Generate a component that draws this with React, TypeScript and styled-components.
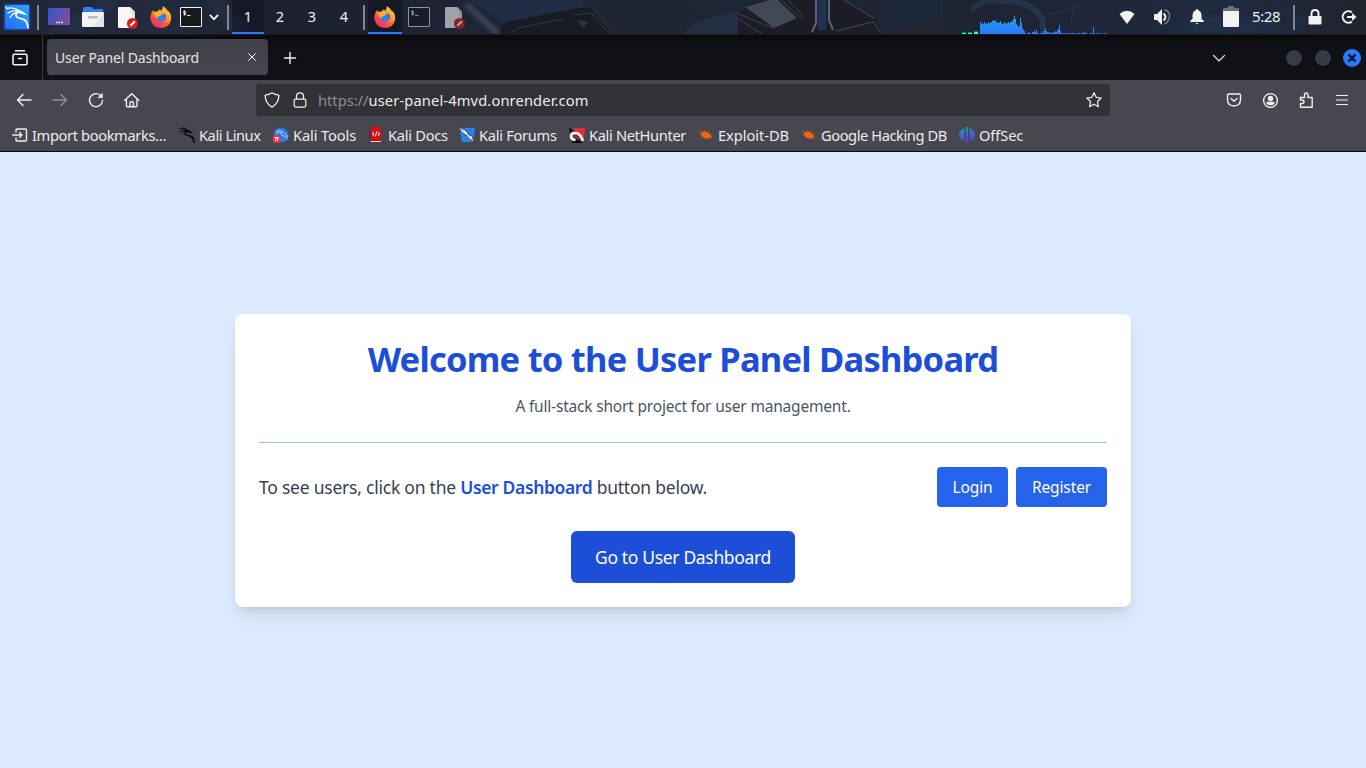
import React from "react";
import styled, { createGlobalStyle } from "styled-components";

const GlobalStyle = createGlobalStyle`
  *, *::before, *::after { box-sizing: border-box; }
  html, body, #root { height: 100%; }
  body { margin: 0; overflow: hidden; font-family: "Noto Sans", "Open Sans", sans-serif; }
  h1, p { margin: 0; }
  button { font-family: inherit; border: 0; }
  svg { display: block; flex: none; }
`;

const Screen = styled.div`
  display: flex;
  flex-direction: column;
  width: 100%;
  height: 100vh;
`;

/* ---------- desktop panel ---------- */

const Panel = styled.header`
  position: relative;
  display: flex;
  justify-content: space-between;
  height: 35px;
  flex: none;
  background: #1f222d;
  color: #f0f0f0;
  overflow: hidden;
`;

const Wallpaper = styled.svg`
  position: absolute;
  inset: 0;
`;

const PanelGroup = styled.div`
  position: relative;
  display: flex;
  height: 34px;
`;

const PanelSlot = styled.div<{ $w: number; $active?: boolean }>`
  display: flex;
  align-items: center;
  justify-content: center;
  width: ${(p) => p.$w}px;
  height: 34px;
  background: ${(p) => (p.$active ? "rgba(10, 14, 26, 0.45)" : "transparent")};
  box-shadow: ${(p) => (p.$active ? "inset 0 -2px #2777ff" : "none")};
`;

const Workspace = styled(PanelSlot)`
  padding-bottom: 2px;
  font-size: 14.5px;
  line-height: 32px;
`;

const PanelRule = styled.span<{ $gap: number }>`
  width: 2px;
  height: 25px;
  margin: 5px ${(p) => p.$gap}px 0 0;
  background: #85868b;
`;

const Clock = styled.span`
  width: 41px;
  height: 33px;
  line-height: 33px;
  font-size: 15px;
  letter-spacing: -0.4px;
`;

/* ---------- browser ---------- */

const TabStrip = styled.div`
  display: flex;
  align-items: center;
  height: 45px;
  flex: none;
  background: linear-gradient(#0b0b0e, #101116 12px);
  color: #f4f4f4;
`;

const ViewButton = styled.div`
  display: flex;
  align-items: center;
  width: 43px;
  height: 45px;
  padding-left: 11px;
  border-right: 1px solid #3b3c41;
`;

const Tab = styled.div`
  display: flex;
  align-items: center;
  justify-content: space-between;
  width: 221px;
  height: 36px;
  margin: 0 15px 1px 4px;
  padding: 0 11px 0 8px;
  border-radius: 4px;
  background: linear-gradient(#3f4047, #46474f);
  color: #e3e3e4;
  font-size: 14px;
  letter-spacing: -0.15px;
  white-space: nowrap;
`;

const Spacer = styled.div`
  flex: 1;
`;

const WindowControls = styled.div`
  display: flex;
  align-items: center;
  gap: 11px;
  margin: 0 5px 0 59px;
`;

const Knob = styled.span<{ $close?: boolean }>`
  display: grid;
  place-items: center;
  width: 18px;
  height: 18px;
  border: ${(p) => (p.$close ? "0" : "1px solid #08090c")};
  border-radius: 50%;
  background: ${(p) => (p.$close ? "#2777ff" : "#373b47")};
`;

const NavBar = styled.div`
  display: flex;
  align-items: center;
  height: 40px;
  flex: none;
  background: #46474f;
  color: #fbfbfe;
`;

const NavButtons = styled.div`
  display: flex;
  gap: 20px;
  width: 256px;
  padding-left: 16px;
`;

const UrlBar = styled.div`
  display: flex;
  align-items: center;
  width: 854px;
  height: 32px;
  padding: 0 8px;
  border-radius: 4px;
  background: #313236;
`;

const SiteIcons = styled.div`
  display: flex;
  gap: 12px;
`;

const Address = styled.div`
  flex: 1;
  margin-left: 10px;
  font-size: 14.67px;
  color: #ececee;
  letter-spacing: 0.14px;
  white-space: nowrap;
`;

const Scheme = styled.span`
  color: #8f8f93;
  letter-spacing: 0;
`;

const NavTools = styled.div`
  display: flex;
  gap: 20px;
  margin-left: 116px;
`;

const BookmarkBar = styled.nav`
  display: flex;
  align-items: center;
  height: 32px;
  flex: none;
  padding: 0 0 1px 12px;
  background: #46474f;
  border-bottom: 1px solid #0c0c0d;
`;

const Bookmark = styled.a<{ $w: number; $track: number }>`
  display: flex;
  align-items: center;
  gap: 4px;
  width: ${(p) => p.$w}px;
  flex: none;
  color: #ececee;
  font-size: 14.67px;
  line-height: 20px;
  letter-spacing: ${(p) => p.$track}px;
  white-space: nowrap;
`;

/* ---------- page ---------- */

const Page = styled.main`
  display: flex;
  flex: 1;
  align-items: center;
  justify-content: center;
  background: #dbeafe;
`;

const Card = styled.section`
  width: 896px;
  padding: 24px;
  border-radius: 8px;
  background: #fff;
  box-shadow: 0 10px 15px -3px rgba(0, 0, 0, 0.1), 0 4px 6px -4px rgba(0, 0, 0, 0.1);
`;

const CardHeader = styled.div`
  padding-bottom: 24px;
  margin-bottom: 24px;
  border-bottom: 1px solid #93c5fd;
  text-align: center;
`;

const Title = styled.h1`
  height: 40px;
  margin-bottom: 16px;
  color: #1d4ed8;
  font-size: 34.5px;
  line-height: 41px;
  font-weight: 700;
  letter-spacing: -0.77px;
  white-space: nowrap;
`;

const Subtitle = styled.p`
  color: #4b5563;
  font-size: 15.5px;
  line-height: 24px;
  letter-spacing: -0.19px;
`;

const ActionRow = styled.div`
  display: flex;
  align-items: center;
  justify-content: space-between;
  margin-bottom: 24px;
`;

const Hint = styled.p`
  color: #374151;
  font-size: 17.5px;
  line-height: 28px;
  letter-spacing: -0.23px;
  white-space: nowrap;
`;

const Strong = styled.span`
  color: #1d4ed8;
  font-weight: 600;
  letter-spacing: -0.36px;
`;

const ButtonGroup = styled.div`
  display: flex;
  gap: 8px;
`;

const Button = styled.button<{ $w: number; $large?: boolean }>`
  display: block;
  width: ${(p) => p.$w}px;
  height: ${(p) => (p.$large ? 52 : 40)}px;
  margin: ${(p) => (p.$large ? "0 auto" : "0")};
  padding: 0;
  border-radius: ${(p) => (p.$large ? 6 : 4)}px;
  background: ${(p) => (p.$large ? "#1d4ed8" : "#2563eb")};
  color: #fff;
  font-size: ${(p) => (p.$large ? 17.5 : 15.5)}px;
  letter-spacing: ${(p) => (p.$large ? -0.34 : -0.12)}px;
  white-space: nowrap;
`;

/* ---------- drawings ---------- */

const PanelArt = () => (
  <Wallpaper width="1366" height="35" viewBox="0 0 1366 35">
    <defs>
      <linearGradient id="sky" x1="0" x2="1">
        <stop offset="0" stopColor="#1f2638" />
        <stop offset=".12" stopColor="#222a3c" />
        <stop offset=".2" stopColor="#1d212e" />
        <stop offset=".45" stopColor="#1e2738" />
        <stop offset=".7" stopColor="#1d2331" />
        <stop offset=".9" stopColor="#202a3f" />
        <stop offset="1" stopColor="#20232e" />
      </linearGradient>
      <filter id="soft"><feGaussianBlur stdDeviation="2" /></filter>
    </defs>
    <rect width="1366" height="35" fill="url(#sky)" />
    <path d="M40 35 100 0h22L80 35zM205 0l30 35h22L222 0z" fill="#27334c" opacity=".6" filter="url(#soft)" />
    <path d="M470 0h115l-5 10-76 14z" fill="#212d44" />
    <path d="M466 4l32 30" stroke="#414e68" strokeWidth="6" opacity=".8" filter="url(#soft)" />
    <path d="M587 0v9" stroke="#3f5885" strokeWidth="8" filter="url(#soft)" />
    <path d="M501 34v-8l6-4 70-14h13l24 26z" fill="#191b24" />
    <path d="M511 33l7-5 46-9M575 15l16-2 5 4" stroke="#2b3c4c" fill="none" />
    <path d="M577 20l11 2-5 6z" fill="#2f333e" />
    <path d="M592 15l18 19M598 17l16 17" stroke="#35323b" fill="none" />
    <path d="M595 0h92l22 18-27 16h-68z" fill="#1d2433" />
    <path d="M684 34q5-11 22-15l34-8v23z" fill="#252f43" />
    <path d="M738 34V14l10-8 22-6h72l34 19 7 15z" fill="#1b1c25" />
    <path d="M745 7l25-7h8l19 18-23 10z" fill="#424856" />
    <path d="M739 14l34 14M739 19l23 15M781 0l22 20M788 0l16 17" stroke="#45424a" fill="none" />
    <path d="M816 0v23l-4 9M829 0v20l4 10" stroke="#58647a" strokeWidth="2" fill="none" />
    <path d="M822 0v30" stroke="#22334f" strokeWidth="9" />
    <path d="M836 31l37-9 9 12M844 0l31 19" stroke="#3f4b5d" fill="none" />
    <path d="M884 28l58-12v18h-58z" fill="#202433" />
    <path d="M943 0v18l-57 11V0z" fill="#1d293b" />
    <path d="M971 11q10-13 30-10 31 0 42 18v15" stroke="#2a3750" strokeWidth="6" fill="none" opacity=".7" />
    <path d="M1018 0q20 3 27 29M1047 15l36-9M1075 0l-5 28" stroke="#2d4250" fill="none" opacity=".7" />
    <path d="M1170 34l32-19 70 4 26 15zM1270 0l34 18v16" fill="#223454" opacity=".45" filter="url(#soft)" />
    <rect y="34" width="1366" height="1" fill="#1b1c22" />
  </Wallpaper>
);

const KaliLogo = () => (
  <svg width="28" height="28" viewBox="0 0 28 28">
    <defs>
      <linearGradient id="kali" x1="1" x2="0" y2="1">
        <stop stopColor="#29a8fb" />
        <stop offset="1" stopColor="#2767ff" />
      </linearGradient>
      <filter id="glow"><feGaussianBlur stdDeviation="1" /></filter>
    </defs>
    <rect x="1" y="1" width="26" height="26" rx="2" fill="#1764ee" opacity=".7" filter="url(#glow)" />
    <rect x="2" y="2" width="24" height="24" fill="url(#kali)" />
    <path d="M3.500 5.500Q10 3.500 17 8M5 10Q10 6.500 17 8M7 14.500Q10 9.500 16 9M4 5.500 2.800 4.500" stroke="#fff" strokeWidth="1.300" fill="none" strokeLinecap="round" />
    <path d="M15 7Q19 7.500 22 10L24.500 12.500 21 11.500Q18 11 15.500 10z" fill="#fff" />
    <path d="M14.500 9Q11.500 12 14.500 14.500 17 15.700 20 16.200 24.300 17.500 25 24.500" stroke="#fff" strokeWidth="1.800" fill="none" strokeLinecap="round" />
  </svg>
);

const DesktopIcon = () => (
  <svg width="22" height="18" viewBox="0 0 22 18">
    <defs>
      <linearGradient id="desk" x1="0" x2="1" y2=".5">
        <stop stopColor="#3452cf" />
        <stop offset="1" stopColor="#79519f" />
      </linearGradient>
    </defs>
    <rect width="22" height="17" rx="1" fill="url(#desk)" />
    <path d="M8 14.500h1.500M10.500 14.500h1.500M13 14.500h1.500" stroke="#fff" strokeWidth="1.500" />
  </svg>
);

const FolderIcon = () => (
  <svg width="22" height="20" viewBox="0 0 22 20">
    <path d="M1 1.500Q1 0 2.500 0h7l2 2h8.500q1 0 1 1v6H1z" fill="#3180f0" />
    <rect y="5" width="22" height="15" rx="1" fill="#f3f3f3" />
    <path d="M22 5v14q0 1-1 1h-10z" fill="#dedede" opacity=".8" />
    <rect x="6" y="9" width="10" height="2.500" rx="1.200" fill="#b8b8b8" />
  </svg>
);

const DocumentIcon = ({ dim = false }: { dim?: boolean }) => (
  <svg width="22" height="23" viewBox="-1 0 22 23" opacity={dim ? 0.6 : 1}>
    <path d="M2 1h11l5 5v15q0 1-1 1H2q-1 0-1-1V2q0-1 1-1z" fill="#f7f7f7" />
    <path d="M13 1l5 5v10z" fill="#ddd" />
    <circle cx="15.500" cy="17.500" r="5.500" fill="#d51d23" />
    <path d="M12.800 20.200l.6-2 3.700-3.700 1.500 1.500-3.700 3.700z" fill="#fff" />
  </svg>
);

const FirefoxIcon = () => (
  <svg width="22" height="22" viewBox="0 0 22 22">
    <defs>
      <linearGradient id="fox" x1=".9" y1="0" x2=".2" y2="1">
        <stop stopColor="#ffe742" />
        <stop offset=".4" stopColor="#ff9a2c" />
        <stop offset=".7" stopColor="#ff4c40" />
        <stop offset="1" stopColor="#ed2475" />
      </linearGradient>
    </defs>
    <path d="M3 4l1.500 2L8 5l2-2 1.500 3L13 0q5 4 5 6l1-1q3 5 2 9-2 8-10 8T1 15Q-1 9 3 4z" fill="url(#fox)" />
    <circle cx="11" cy="11.500" r="4.700" fill="#3b7ce9" />
    <path d="M4 6h5q2-2 3-2-1 3 2 3l-4 3q-2 0-3 2Q4 10 4 6z" fill="#ffad2c" />
    <path d="M14 7q3 2 2 6l-2-3z" fill="#7057d4" />
  </svg>
);

const TerminalIcon = ({ dim = false }: { dim?: boolean }) => (
  <svg width="22" height="20" viewBox="0 0 22 20" opacity={dim ? 0.55 : 1}>
    <rect x=".5" y=".5" width="21" height="19" rx=".5" fill="#17181c" stroke="#f2f2f2" />
    <path d="M5.700 4.300H3.600v1.600h2v1.700H3.300M4.600 3.300v5.200M7 8.500h3.500" stroke="#f4f4f4" strokeWidth=".9" fill="none" />
  </svg>
);

const LOAD = [
  12, 10, 11, 10, 12, 10, 11, 10, 12, 11, 11, 12, 13, 14, 13, 14, 12, 11, 12, 11, 13, 11, 10, 10, 12, 11, 10, 11, 12, 11,
  12, 12, 13, 15, 18, 15, 10, 8, 7, 8, 16, 11, 6, 4, 3, 1, 0, 1, 2, 1, 1, 0, 2, 2, 4, 2, 4, 1, 1, 0, 1, 1, 1, 3, 3, 6, 3, 2,
  2, 1, 2, 1, 1, 2, 2, 3, 2, 4, 5, 9, 3, 1, 0, 1, 1, 1, 0, 1, 1, 1, 0, 1, 1, 1, 1, 0, 1, 1, 1, 1, 0, 1, 1, 2, 1, 2, 0, 1, 0, 0, 1, 1,
  1, 7, 1, 0, 1, 1, 0, 1, 0, 1, 0, 0, 1, 0, 1, 0,
];

const LoadGraph = () => (
  <svg width="148" height="34" viewBox="0 0 148 34">
    <defs>
      <linearGradient id="load" gradientUnits="userSpaceOnUse" x1="0" x2="0" y1="18" y2="34">
        <stop stopColor="#1f9df2" />
        <stop offset="1" stopColor="#2977fb" />
      </linearGradient>
    </defs>
    <path d="M0 32.500h4M6 32.500h4M12 31.500h4" stroke="#0f7f80" />
    <path d="M0 33.500h4M6 33.500h4" stroke="#18ffdc" />
    <path d="M12 33h4" stroke="#18ffdc" strokeWidth="2" />
    <g fill="url(#load)">
      {LOAD.map((h, i) => (
        <rect key={i} x={18 + i} y={34 - h} width="1" height={h} />
      ))}
    </g>
  </svg>
);

const Chevron = ({ size, weight }: { size: number; weight: number }) => (
  <svg width={size} height={size} viewBox="0 0 12 12" fill="none" stroke="#f2f2f2" strokeWidth={weight}>
    <path d="M1 3.500l5 5 5-5" />
  </svg>
);

const WifiIcon = () => (
  <svg width="16" height="16" viewBox="0 0 16 16">
    <path d="M.5 5Q8-1.500 15.500 5L8 15z" fill="#f2f2f2" />
  </svg>
);

const VolumeIcon = () => (
  <svg width="18" height="18" viewBox="0 0 18 18">
    <path d="M1 6h3l5-5v16l-5-5H1z" fill="#f2f2f2" />
    <path d="M10.500 5.500q4 3.500 0 7" stroke="#f2f2f2" strokeWidth="2" fill="none" />
    <path d="M11.500 1.800q8 2.500 3.500 11.200-1.500 2-3.500 3" stroke="#777c87" strokeWidth="1.500" fill="none" />
  </svg>
);

const BellIcon = () => (
  <svg width="16" height="16" viewBox="0 0 16 16" fill="#f2f2f2">
    <path d="M8 0q1 0 1 1.200Q12 2 12.500 6v4l2.500 2v1H1v-1l2.500-2V6Q4 2 7 1.200 7 0 8 0zM6.500 14h3L8 15.500z" />
  </svg>
);

const BatteryIcon = () => (
  <svg width="16" height="22" viewBox="0 0 16 22">
    <path d="M5 0h6v2h4q1 0 1 1v4H0V3q0-1 1-1h4z" fill="#6b6f78" />
    <path d="M0 5h16v15q0 1-1 1H1q-1 0-1-1z" fill="#f2f2f2" />
  </svg>
);

const PanelLockIcon = () => (
  <svg width="14" height="16" viewBox="0 0 14 16">
    <path d="M3.500 8V4.500Q3.500 1 7 1t3.500 3.500V8" stroke="#f2f2f2" strokeWidth="2" fill="none" />
    <rect x=".5" y="7" width="13" height="8.500" rx="1" fill="#f2f2f2" />
  </svg>
);

const LogoutIcon = () => (
  <svg width="16" height="16" viewBox="0 0 16 16">
    <path d="M10.800 3.400A5.700 5.700 0 1 0 10.800 12.600" stroke="#f2f2f2" strokeWidth="2" fill="none" />
    <path d="M6 7h5V4l4.500 4-4.500 4V9H6z" fill="#f2f2f2" />
  </svg>
);

type LineIconProps = { children: React.ReactNode; size?: number; weight?: number; dim?: boolean };

const LineIcon = ({ children, size = 16, weight = 1.25, dim = false }: LineIconProps) => (
  <svg
    width={size}
    height={size}
    viewBox={`0 0 ${size} ${size}`}
    fill="none"
    stroke="#f0f0f2"
    strokeWidth={weight}
    strokeLinecap="round"
    strokeLinejoin="round"
    opacity={dim ? 0.42 : 1}
  >
    {children}
  </svg>
);

const DragonMark = () => (
  <svg width="16" height="16" viewBox="0 0 16 16" fill="none" stroke="#08090b" strokeLinecap="round">
    <path d="M.5 1.500Q4 .8 8 3M1 4.500Q4 2.500 8 3.500M2.500 6.500Q5 4 8 4M4 .6l3 1.400" strokeWidth=".9" />
    <path d="M7 2.500Q11 3 13.500 6.500L10 5.500 7 4.500z" fill="#08090b" strokeWidth=".5" />
    <path d="M7.500 4Q5 6 7 7.800 9 8.800 11 9 14 10 15 15" strokeWidth="1.700" />
    <path d="M12 9.500q3 0 3.500 2" />
  </svg>
);

const ToolsMark = () => (
  <svg width="16" height="16" viewBox="0 0 16 16">
    <circle cx="8" cy="8" r="7.500" fill="#2878ee" />
    <path d="M3 4.500Q8 2 11 6q3 2 4 4M3 6.500q3-2 6-1M8 6q0 3 4 3.500 2 1 2 3" stroke="#b9d8ff" strokeWidth="1" fill="none" />
    <rect x="0" y="8" width="7.500" height="8" rx="2.500" fill="#ef3440" />
    <path d="M1.500 10.500h4.500M2.800 10.500v3.500M4.800 10.500v3.500" stroke="#fff" />
  </svg>
);

const DocsMark = () => (
  <svg width="16" height="16" viewBox="0 0 16 16">
    <path d="M1 0h12v15.500H1z" fill="#ad0f16" />
    <path d="M3 0h10v13H3z" fill="#df0c13" />
    <path d="M2 14.500h11" stroke="#efe4df" />
    <path d="M1 0h1.500v15H1z" fill="#283f70" />
    <path d="M6 5L4.500 7 6 9M10 5l1.500 2L10 9M8.800 4.500L7.300 9.500" stroke="#fff" fill="none" />
  </svg>
);

const ForumsMark = () => (
  <svg width="16" height="16" viewBox="0 0 16 16">
    <path d="M0 1h16L14 15H3z" fill="#2583f5" />
    <path d="M0 0l6 3 4 5 3 1 2 6-5-3-3-4-4-2z" fill="#f4f4ed" stroke="#20242b" strokeWidth=".7" />
    <path d="M1 1l5 6M8 8l5 5" stroke="#888a88" strokeWidth=".7" />
  </svg>
);

const HunterMark = () => (
  <svg width="16" height="16" viewBox="0 0 16 16">
    <path d="M0 1l4 2-3 3zM2 10l12 5-2 1H3z" fill="#090a0d" />
    <path d="M4 1h12l-1 11-3 1z" fill="#ef2635" />
    <path d="M14 14Q11.500 7 7.500 6 2 5.500 2 9.500 2.500 13 6.500 13" fill="none" stroke="#f7f7f7" strokeWidth="2.600" />
    <path d="M5 9.800q2-1.500 4.500 2" stroke="#cf1629" strokeWidth="1.600" fill="none" />
  </svg>
);

const BugMark = () => (
  <svg width="16" height="16" viewBox="0 0 16 16">
    <path d="M1 3.500l4 2M1 8.500l3-1M6 2l1 3M10 4l2-1.500M12 8l2.500-1M4 10l-1.500 1.500M8 11.500L7 13M12 11l2 2" stroke="#a85a2b" strokeWidth=".7" />
    <path d="M1 4.800q2 .7 3 .5 3-1.800 6.500.5 2.300 1.700 3.500 5l-2-.3q-1.500 2-5 .8Q3.500 10 3.300 7z" fill="#f06513" />
  </svg>
);

const OffsecMark = () => (
  <svg width="16" height="16" viewBox="0 0 16 16">
    <defs>
      <linearGradient id="off" x1="0" x2=".3" y1="0" y2="1">
        <stop stopColor="#12a6b8" />
        <stop offset="1" stopColor="#6438dc" />
      </linearGradient>
    </defs>
    <path d="M5.500 1v13Q0 12 0 7.500T5.500 1zM10.500 1Q16 3 16 7.500T10.500 14zM7 0h2v16H7z" fill="url(#off)" />
  </svg>
);

const ImportMark = () => (
  <LineIcon weight={1.4}>
    <path d="M4 5V3q0-1 1-1h8.500q1 0 1 1v10q0 1-1 1H5q-1 0-1-1v-2M.7 8h9M7.500 5.500L10 8l-2.500 2.500" />
  </LineIcon>
);

const BOOKMARKS = [
  { label: "Import bookmarks…", width: 167, track: -0.38, icon: <ImportMark /> },
  { label: "Kali Linux", width: 94, track: -0.45, icon: <DragonMark /> },
  { label: "Kali Tools", width: 95, track: -0.12, icon: <ToolsMark /> },
  { label: "Kali Docs", width: 91, track: -0.28, icon: <DocsMark /> },
  { label: "Kali Forums", width: 110, track: -0.3, icon: <ForumsMark /> },
  { label: "Kali NetHunter", width: 129, track: -0.35, icon: <HunterMark /> },
  { label: "Exploit-DB", width: 103, track: -0.05, icon: <BugMark /> },
  { label: "Google Hacking DB", width: 158, track: -0.43, icon: <BugMark /> },
  { label: "OffSec", width: 70, track: -0.1, icon: <OffsecMark /> },
];

const DesktopPanel = () => (
  <Panel>
    <PanelArt />
    <PanelGroup>
      <PanelSlot $w={34}><KaliLogo /></PanelSlot>
      <PanelSlot $w={3} />
      <PanelRule $gap={3} />
      <PanelSlot $w={34}><DesktopIcon /></PanelSlot>
      <PanelSlot $w={34}><FolderIcon /></PanelSlot>
      <PanelSlot $w={34}><DocumentIcon /></PanelSlot>
      <PanelSlot $w={34}><FirefoxIcon /></PanelSlot>
      <PanelSlot $w={26}><TerminalIcon /></PanelSlot>
      <PanelSlot $w={19}><Chevron size={10} weight={2.2} /></PanelSlot>
      <PanelSlot $w={4} />
      <PanelRule $gap={3} />
      {["1", "2", "3", "4"].map((n) => (
        <Workspace key={n} $w={32} $active={n === "1"}>{n}</Workspace>
      ))}
      <PanelSlot $w={3} />
      <PanelRule $gap={3} />
      <PanelSlot $w={34} $active><FirefoxIcon /></PanelSlot>
      <PanelSlot $w={34}><TerminalIcon dim /></PanelSlot>
      <PanelSlot $w={35}><DocumentIcon dim /></PanelSlot>
    </PanelGroup>
    <PanelGroup>
      <LoadGraph />
      <PanelSlot $w={34}><WifiIcon /></PanelSlot>
      <PanelSlot $w={35}><VolumeIcon /></PanelSlot>
      <PanelSlot $w={35}><BellIcon /></PanelSlot>
      <PanelSlot $w={34}><BatteryIcon /></PanelSlot>
      <PanelSlot $w={4} />
      <Clock>5:28</Clock>
      <PanelRule $gap={3} />
      <PanelSlot $w={34}><PanelLockIcon /></PanelSlot>
      <PanelSlot $w={34}><LogoutIcon /></PanelSlot>
    </PanelGroup>
  </Panel>
);

const Browser = () => (
  <>
    <TabStrip>
      <ViewButton>
        <LineIcon size={18} weight={1.6}>
          <path d="M4.500 1.800h9M3.500 5.300h11q1.500 0 1.500 1.500v7.500q0 1.500-1.500 1.500h-11Q2 15.800 2 14.300V6.800q0-1.500 1.500-1.500zM7.500 9.500h3" />
        </LineIcon>
      </ViewButton>
      <Tab>
        User Panel Dashboard
        <LineIcon size={10} weight={1}><path d="M1.500 1.500l7 7M8.500 1.500l-7 7" /></LineIcon>
      </Tab>
      <LineIcon size={14} weight={1.4}><path d="M7 1.500v11M1.500 7h11" /></LineIcon>
      <Spacer />
      <Chevron size={14} weight={1.1} />
      <WindowControls>
        <Knob />
        <Knob />
        <Knob $close>
          <svg width="10" height="10" viewBox="0 0 10 10"><path d="M1.500 1.500l7 7M8.500 1.500l-7 7" stroke="#0b1020" strokeWidth="2.300" /></svg>
        </Knob>
      </WindowControls>
    </TabStrip>
    <NavBar>
      <NavButtons>
        <LineIcon weight={1.5}><path d="M15 8H1.500M7 2.500L1.500 8 7 13.500" /></LineIcon>
        <LineIcon weight={1.5} dim><path d="M1 8h13.500M9 2.500L14.500 8 9 13.500" /></LineIcon>
        <LineIcon weight={1.4}>
          <path d="M14.500 8.500A6.500 6.500 0 1 1 12.300 3.300L13.500 4.500" />
          <path d="M14.500 1.200v4.600H9.900z" fill="#f0f0f2" strokeWidth=".4" />
        </LineIcon>
        <LineIcon weight={1.4}><path d="M.7 8.300l7-6.500 7 6.500M2.400 7.300v6.500q0 1 1 1H12q1 0 1-1V7.300M6 14.800v-4q0-1 1-1h1.400q1 0 1 1v4" /></LineIcon>
      </NavButtons>
      <UrlBar>
        <SiteIcons>
          <LineIcon><path d="M8 .8Q11 3 14.800 3.200 15 10.800 8 15.200 1 10.800 1.200 3.200 5 3 8 .8z" /></LineIcon>
          <LineIcon><path d="M4.500 7V4Q4.500 .8 8 .8T11.500 4v3M3.500 7h9q1.300 0 1.300 1.300v5.200q0 1.500-1.300 1.500h-9q-1.300 0-1.300-1.500V8.300Q2.200 7 3.500 7z" /></LineIcon>
        </SiteIcons>
        <Address><Scheme>https://</Scheme>user-panel-4mvd.onrender.com</Address>
        <LineIcon><path d="M8 .7l2.200 4.600 5 .7-3.700 3.500.9 5.200L8 12.200l-4.400 2.500.9-5.200L.8 6l5-.7z" /></LineIcon>
      </UrlBar>
      <NavTools>
        <LineIcon weight={1.4}><path d="M2.500 2h11q1 0 1 1v4.500Q14.500 14 8 14T1.500 7.500V3q0-1 1-1zM5 6.500l3 2.700 3-2.700" /></LineIcon>
        <LineIcon weight={1.4}>
          <circle cx="8.500" cy="8.500" r="6.900" />
          <circle cx="8.500" cy="6.500" r="2" fill="#f0f0f2" />
          <path d="M5 10.500h7q-.5 2-3.500 2T5 10.500z" fill="#f0f0f2" />
        </LineIcon>
        <LineIcon weight={1.4}><path d="M6.500 5.500V3q0-2 1.700-2t1.700 2v2.500h4.300v9.700H2.500v-3.700H4q2 0 2-1.700T4 8H2.500V5.500z" /></LineIcon>
        <LineIcon weight={1.2}><path d="M2.500 3.500h11M2.500 8h11M2.500 12.500h11" /></LineIcon>
      </NavTools>
    </NavBar>
    <BookmarkBar>
      {BOOKMARKS.map((b) => (
        <Bookmark key={b.label} $w={b.width} $track={b.track}>
          {b.icon}
          {b.label}
        </Bookmark>
      ))}
    </BookmarkBar>
  </>
);

export default function App() {
  return (
    <Screen>
      <GlobalStyle />
      <DesktopPanel />
      <Browser />
      <Page>
        <Card>
          <CardHeader>
            <Title>Welcome to the User Panel Dashboard</Title>
            <Subtitle>A full-stack short project for user management.</Subtitle>
          </CardHeader>
          <ActionRow>
            <Hint>
              To see users, click on the <Strong>User Dashboard</Strong> button below.
            </Hint>
            <ButtonGroup>
              <Button $w={71}>Login</Button>
              <Button $w={91}>Register</Button>
            </ButtonGroup>
          </ActionRow>
          <Button $w={224} $large>Go to User Dashboard</Button>
        </Card>
      </Page>
    </Screen>
  );
}
